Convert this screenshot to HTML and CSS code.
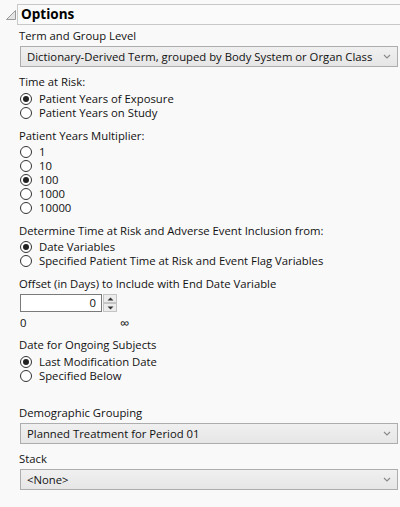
FILE: index.html
```html
<!DOCTYPE html>
<html>
<head>
<meta charset="utf-8">
<link rel="stylesheet" href="styles.css">
</head>
<body>
<div class="panel">
  <div class="head">
    <svg class="tri" width="10" height="10" viewBox="0 0 10 10"><polygon points="9.5,0.5 9.5,9.5 0.5,9.5" fill="#e4e4e4" stroke="#9a9a9a" stroke-width="1"/></svg>
    <div class="title">Options</div>
  </div>
  <div class="content">
    <div class="lbl first">Term and Group Level</div>
    <div class="select"><span>Dictionary-Derived Term, grouped by Body System or Organ Class</span><svg class="chev" width="8" height="5" viewBox="0 0 8 5"><polyline points="1,1 4,4 7,1" fill="none" stroke="#888" stroke-width="1.1"/></svg></div>

    <div class="lbl g8">Time at Risk:</div>
    <div class="radios">
      <div class="radio"><span class="dot on"></span>Patient Years of Exposure</div>
      <div class="radio"><span class="dot"></span>Patient Years on Study</div>
    </div>

    <div class="lbl g9 tight">Patient Years Multiplier:</div>
    <div class="radios">
      <div class="radio"><span class="dot"></span>1</div>
      <div class="radio"><span class="dot"></span>10</div>
      <div class="radio"><span class="dot on"></span>100</div>
      <div class="radio"><span class="dot"></span>1000</div>
      <div class="radio"><span class="dot"></span>10000</div>
    </div>

    <div class="lbl g9 tight">Determine Time at Risk and Adverse Event Inclusion from:</div>
    <div class="radios">
      <div class="radio"><span class="dot on"></span>Date Variables</div>
      <div class="radio"><span class="dot"></span>Specified Patient Time at Risk and Event Flag Variables</div>
    </div>

    <div class="lbl g9">Offset (in Days) to Include with End Date Variable</div>
    <div class="spinrow">
      <div class="numbox">0</div>
      <div class="spin">
        <div class="sb"><svg width="7" height="4" viewBox="0 0 7 4"><polygon points="0.5,3.5 3.5,0.5 6.5,3.5" fill="#333"/></svg></div>
        <div class="sb"><svg width="7" height="4" viewBox="0 0 7 4"><polygon points="0.5,0.5 3.5,3.5 6.5,0.5" fill="#333"/></svg></div>
      </div>
    </div>
    <div class="range"><span class="rmin">0</span><span class="rmax">∞</span></div>

    <div class="lbl g8">Date for Ongoing Subjects</div>
    <div class="radios r4">
      <div class="radio"><span class="dot on"></span>Last Modification Date</div>
      <div class="radio"><span class="dot"></span>Specified Below</div>
    </div>

    <div class="lbl big">Demographic Grouping</div>
    <div class="select"><span>Planned Treatment for Period 01</span><svg class="chev" width="8" height="5" viewBox="0 0 8 5"><polyline points="1,1 4,4 7,1" fill="none" stroke="#888" stroke-width="1.1"/></svg></div>

    <div class="lbl g8">Stack</div>
    <div class="select"><span>&lt;None&gt;</span><svg class="chev" width="8" height="5" viewBox="0 0 8 5"><polyline points="1,1 4,4 7,1" fill="none" stroke="#888" stroke-width="1.1"/></svg></div>
  </div>
</div>
</body>
</html>
```

FILE: styles.css
```css
html, body {
  margin: 0;
  padding: 0;
  background: #f9f9f9;
}
body {
  width: 400px;
  height: 507px;
  overflow: hidden;
  font-family: "Open Sans", "Noto Sans", sans-serif;
  font-size: 11.3px;
  color: #111;
}
.panel {
  padding-top: 4px;
}
.head {
  display: flex;
  align-items: center;
  height: 21px;
}
.tri {
  margin-left: 6px;
  margin-right: 1px;
  flex: none;
}
.title {
  flex: 1;
  height: 19px;
  border: 1px solid #c8c8c8;
  border-right: none;
  background: #fafafa;
  font-weight: bold;
  font-size: 13.5px;
  line-height: 19px;
  padding-left: 3px;
  color: #000;
}
.content {
  padding-left: 19px;
  padding-right: 2px;
}
.lbl {
  line-height: 14px;
  height: 14px;
  white-space: nowrap;
  margin-bottom: 3px;
}
.lbl.first { margin-top: 4px; }
.lbl.g8 { margin-top: 8px; }
.lbl.g9 { margin-top: 9px; }
.lbl.tight { margin-bottom: 2px; }
.lbl.big { margin-top: 23px; }
.select {
  margin-left: 1px;
  height: 19px;
  border: 1px solid #adadad;
  background: linear-gradient(#f0f0f0, #e6e6e6);
  display: flex;
  align-items: center;
  justify-content: space-between;
  padding-left: 6px;
  padding-right: 6px;
  white-space: nowrap;
}
.chev { flex: none; }
.radios { display: flex; flex-direction: column; }
.radios.r4 { margin-top: 1px; }
.radio {
  display: flex;
  align-items: center;
  height: 14px;
  line-height: 14px;
  white-space: nowrap;
}
.dot {
  box-sizing: border-box;
  width: 12px;
  height: 12px;
  border: 1px solid #333;
  border-radius: 50%;
  background: #fff;
  margin-left: 1px;
  margin-right: 7px;
  display: flex;
  align-items: center;
  justify-content: center;
  flex: none;
}
.dot.on::after {
  content: "";
  width: 6px;
  height: 6px;
  border-radius: 50%;
  background: #222;
}
.spinrow {
  display: flex;
  margin-left: 1px;
  margin-top: 1px;
}
.numbox {
  box-sizing: border-box;
  width: 82px;
  height: 18px;
  border: 1px solid #7a7a7a;
  background: #fff;
  text-align: right;
  padding-right: 5px;
  line-height: 16px;
}
.spin {
  display: flex;
  flex-direction: column;
  margin-left: 1px;
}
.sb {
  box-sizing: border-box;
  width: 14px;
  height: 9px;
  border: 1px solid #c4c4c4;
  background: #ececec;
  display: flex;
  align-items: center;
  justify-content: center;
}
.range {
  display: flex;
  height: 14px;
  line-height: 14px;
  margin-top: 4px;
  margin-left: 1px;
}
.rmin { width: 100px; }
.rmax { font-size: 13px; }
```
